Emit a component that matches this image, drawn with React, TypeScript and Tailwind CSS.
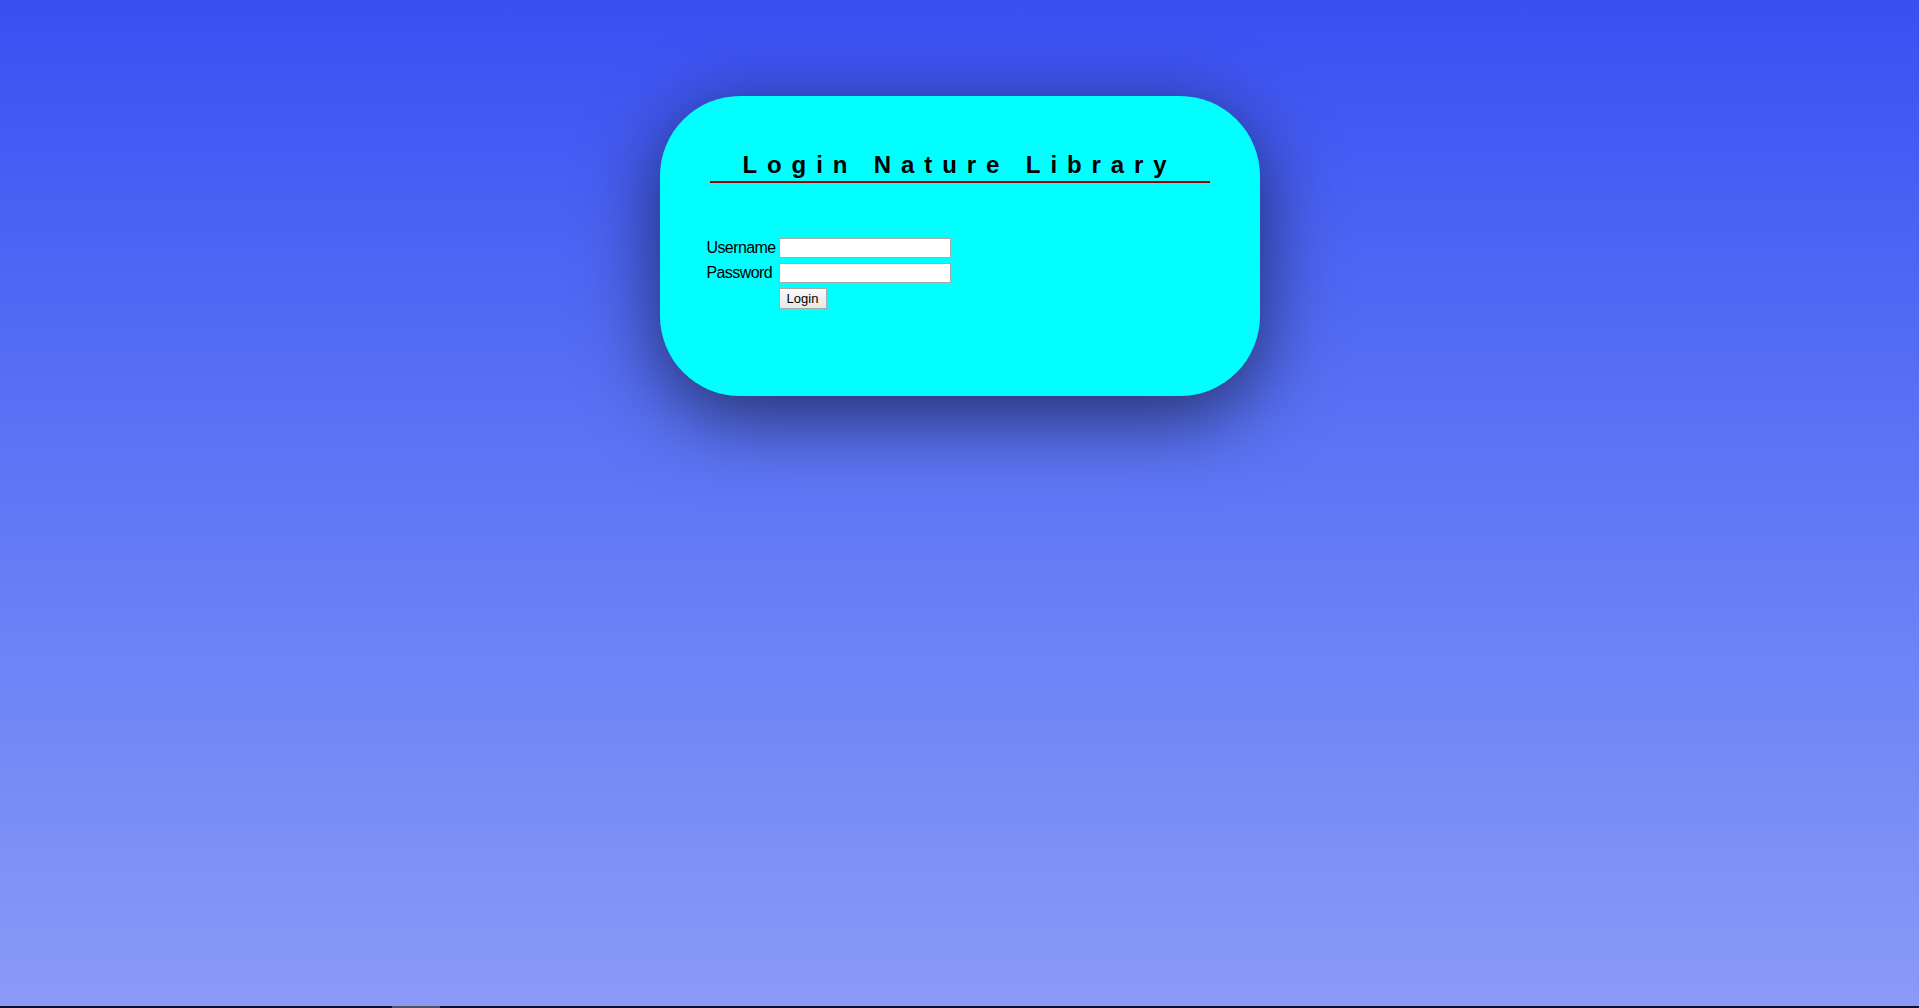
export default function App() {
  return (
    <div className="flex h-screen flex-col font-['Liberation_Sans',Arial,sans-serif] text-black">
      <div className="flex-1 bg-gradient-to-b from-[#3a4ff2] to-[#8b9af7] pt-[96px]">
        <div className="mx-auto h-[300px] w-[600px] rounded-[80px] bg-[#00ffff] pt-[55px] shadow-[0_20px_80px_0_rgba(0,0,0,0.6)]">
          <h2 className="mx-[50px] border-b-2 border-[#8b0000] pb-[2px] text-center text-[24px] font-bold leading-[28px] tracking-[9.9px]">
            Login Nature Library
          </h2>

          <form
            className="ml-[47px] mt-[55px] grid grid-cols-[69px_auto] items-center gap-x-[3px] gap-y-[5px] text-[16px] leading-[20px] tracking-[-0.6px]"
            onSubmit={(e) => e.preventDefault()}
          >
            <label htmlFor="username">Username</label>
            <input
              id="username"
              type="text"
              className="h-[20px] w-[172px] border border-[#a9a9a9] bg-white px-[2px] text-[13px] outline-none"
            />
            <label htmlFor="password">Password</label>
            <input
              id="password"
              type="password"
              className="h-[20px] w-[172px] border border-[#a9a9a9] bg-white px-[2px] text-[13px] outline-none"
            />
            <span />
            <div className="flex">
              <button
                type="submit"
                className="h-[21px] w-[48px] border border-[#a9a9a9] bg-gradient-to-b from-[#fafafa] to-[#e8e8e8] text-[13px] leading-none tracking-normal"
              >
                Login
              </button>
            </div>
          </form>
        </div>
      </div>
      <div className="flex h-[2px] bg-[#0b0e30]">
        <div className="ml-[392px] w-[48px] bg-[#505060]" />
      </div>
    </div>
  );
}
